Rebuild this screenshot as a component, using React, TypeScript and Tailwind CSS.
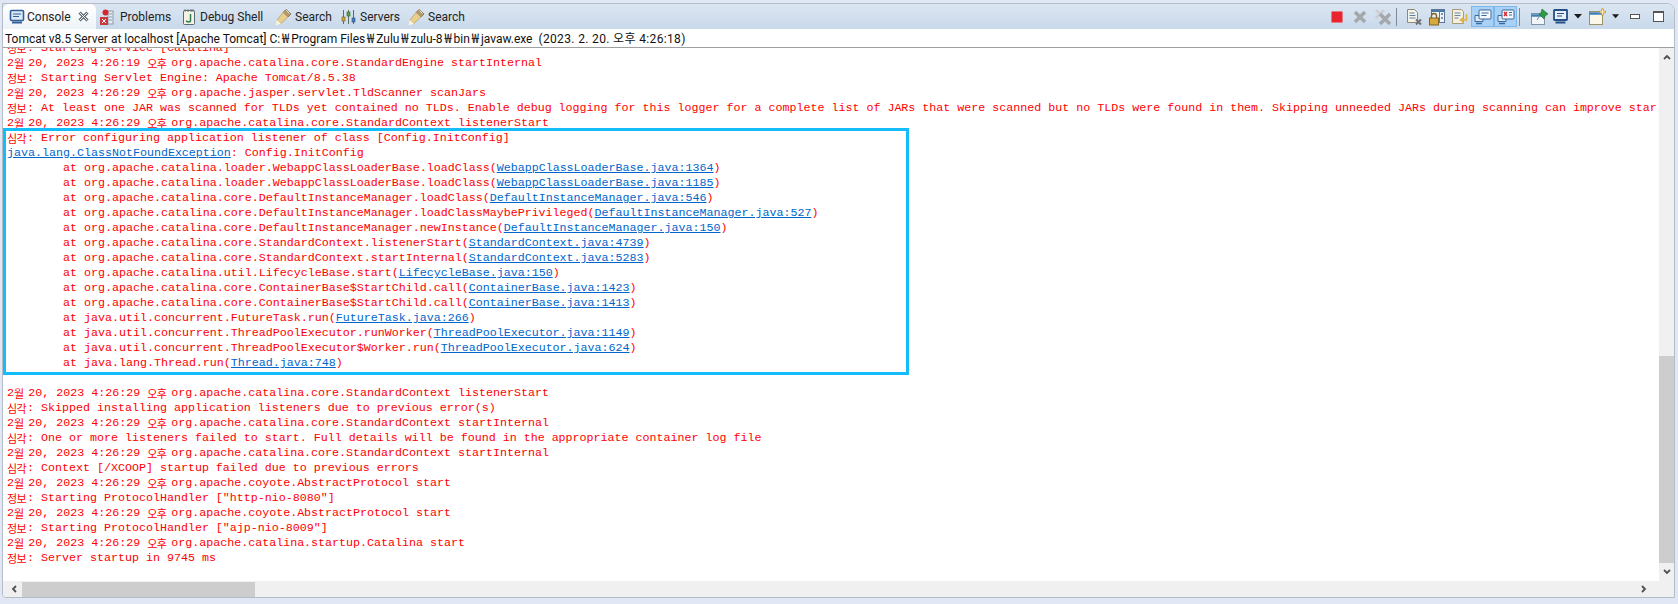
import React from 'react';

const mono = "font-['Liberation_Mono','DejaVu_Sans_Mono',monospace]";

const Ko = ({ w, t }: { w: string; t: string }) => (
  <span className={`inline-block ${w} text-[11px] tracking-[-0.5px] font-['Noto_Sans_CJK_KR',sans-serif] leading-[15px] align-top`}>{t}</span>
);

const Stamp = ({ time, rest }: { time: string; rest: string }) => (
  <div className="h-[15px] whitespace-pre">
    2<Ko w="w-[7.3px]" t="월" /> 20, 2023 {time} <Ko w="w-[17px]" t="오후" /> {rest}
  </div>
);

const Info = ({ text }: { text: string }) => (
  <div className="h-[15px] whitespace-pre">
    <Ko w="w-[20px]" t="정보" />: {text}
  </div>
);

const Severe = ({ text }: { text: string }) => (
  <div className="h-[15px] whitespace-pre">
    <Ko w="w-[20px]" t="심각" />: {text}
  </div>
);

const FileLink = ({ children }: { children: React.ReactNode }) => (
  <span className="text-[#0066cc] underline">{children}</span>
);

const Won = () => (
  <span className="inline-block w-[11px] text-center font-['Noto_Sans_CJK_KR',sans-serif] text-[13px] leading-none">₩</span>
);

const stack = [
  ['org.apache.catalina.loader.WebappClassLoaderBase.loadClass', 'WebappClassLoaderBase.java:1364'],
  ['org.apache.catalina.loader.WebappClassLoaderBase.loadClass', 'WebappClassLoaderBase.java:1185'],
  ['org.apache.catalina.core.DefaultInstanceManager.loadClass', 'DefaultInstanceManager.java:546'],
  ['org.apache.catalina.core.DefaultInstanceManager.loadClassMaybePrivileged', 'DefaultInstanceManager.java:527'],
  ['org.apache.catalina.core.DefaultInstanceManager.newInstance', 'DefaultInstanceManager.java:150'],
  ['org.apache.catalina.core.StandardContext.listenerStart', 'StandardContext.java:4739'],
  ['org.apache.catalina.core.StandardContext.startInternal', 'StandardContext.java:5283'],
  ['org.apache.catalina.util.LifecycleBase.start', 'LifecycleBase.java:150'],
  ['org.apache.catalina.core.ContainerBase$StartChild.call', 'ContainerBase.java:1423'],
  ['org.apache.catalina.core.ContainerBase$StartChild.call', 'ContainerBase.java:1413'],
  ['java.util.concurrent.FutureTask.run', 'FutureTask.java:266'],
  ['java.util.concurrent.ThreadPoolExecutor.runWorker', 'ThreadPoolExecutor.java:1149'],
  ['java.util.concurrent.ThreadPoolExecutor$Worker.run', 'ThreadPoolExecutor.java:624'],
  ['java.lang.Thread.run', 'Thread.java:748'],
];

// tab icons
const ConsoleIcon = () => (
  <svg width="16" height="16" viewBox="0 0 16 16">
    <rect x="1.5" y="1.5" width="13" height="10" rx="1" fill="#dfe9f5" stroke="#2f5f96" strokeWidth="1.6" />
    <path d="M4 5h8M4 7.5h6" stroke="#2f5f96" strokeWidth="1" />
    <path d="M3 13.5h10" stroke="#2f5f96" strokeWidth="2" />
  </svg>
);
const CloseIcon = () => (
  <svg width="11" height="11" viewBox="0 0 11 11">
    <path d="M1.5 1.5l8 8M9.5 1.5l-8 8" stroke="#5a6670" strokeWidth="3" />
    <path d="M1.5 1.5l8 8M9.5 1.5l-8 8" stroke="#f4f6f8" strokeWidth="1" />
  </svg>
);
const ProblemsIcon = () => (
  <svg width="16" height="18" viewBox="0 0 16 18">
    <rect x="9" y="3" width="5" height="13" fill="#e4ebf2" stroke="#8d9aa8" />
    <path d="M10 6h3M10 9h3M10 12h3" stroke="#8d9aa8" />
    <circle cx="6.5" cy="4.5" r="3" fill="#d8262c" />
    <rect x="1" y="9" width="8" height="8" fill="#c93a3e" />
    <path d="M3 11l4 4M7 11l-4 4" stroke="#fff" strokeWidth="1" />
  </svg>
);
const DebugIcon = () => (
  <svg width="14" height="18" viewBox="0 0 14 18">
    <rect x="1.5" y="2.5" width="11" height="14" rx="1" fill="#f6f3e4" stroke="#5f6b72" />
    <path d="M3 1v3M6 1v3M9 1v3M11 1v3" stroke="#6d7880" />
    <path d="M8.5 6v6.5q0 1.5-2 1.5t-2-1.5" fill="none" stroke="#2e7d4f" strokeWidth="1.5" />
  </svg>
);
const SearchIcon = () => (
  <svg width="19" height="18" viewBox="0 0 19 18">
    <path d="M12 1.5l5 4.5-3 3-5-4.5z" fill="#b39a6a" stroke="#8a7a5a" />
    <path d="M9 4.5l5 4.5-7 6.5L3 12z" fill="#e9cf8e" stroke="#b89b5c" strokeWidth="0.7" />
    <path d="M3 12l4 3.5-5.5 2z" fill="#fbf3d2" />
    <path d="M12.5 2.5l3 3" stroke="#e8e4d8" />
  </svg>
);
const ServersIcon = () => (
  <svg width="15" height="16" viewBox="0 0 15 16">
    <path d="M2.5 1v14M7.5 1v14M12.5 1v14" stroke="#5f6b5f" />
    <rect x="1" y="8" width="3" height="4" fill="#d6a93a" stroke="#6b5a20" strokeWidth="0.6" />
    <rect x="6" y="3" width="3" height="4" fill="#5aa24a" stroke="#2f6a2a" strokeWidth="0.6" />
    <rect x="11" y="9" width="3" height="4" fill="#4a7fc0" stroke="#2a4f80" strokeWidth="0.6" />
  </svg>
);

// toolbar icons
const StopIcon = () => (
  <svg width="16" height="16" viewBox="0 0 16 16">
    <rect x="2.5" y="2.5" width="11" height="11" rx="1" fill="#e8252f" stroke="#e57a80" />
  </svg>
);
const GrayX = () => (
  <svg width="16" height="16" viewBox="0 0 16 16">
    <path d="M3 3l10 10M13 3L3 13" stroke="#a4a8ac" strokeWidth="3.6" />
  </svg>
);
const GrayXX = () => (
  <svg width="18" height="18" viewBox="0 0 18 18">
    <path d="M2 2l8 8M10 2l-8 8" stroke="#ccd0d4" strokeWidth="3" />
    <path d="M6 6l10 10M16 6L6 16" stroke="#a4a8ac" strokeWidth="3.4" />
  </svg>
);
const DocX = () => (
  <svg width="18" height="18" viewBox="0 0 18 18">
    <path d="M2.5 1.5h7l3 3v10h-10z" fill="#f3f3ea" stroke="#8d8a70" />
    <path d="M4.5 5h5M4.5 7.5h6M4.5 10h6" stroke="#5a7fa8" />
    <path d="M11 11.5l5 5M16 11.5l-5 5" stroke="#6e7276" strokeWidth="2" />
  </svg>
);
const LockIcon = () => (
  <svg width="18" height="18" viewBox="0 0 18 18">
    <rect x="3.5" y="1.5" width="13" height="13" fill="#eef3f8" stroke="#5f7590" />
    <path d="M3.5 3h13" stroke="#4a78a8" strokeWidth="2" />
    <path d="M11.5 2v12" stroke="#5f7590" />
    <path d="M13 6h2M13 10h2" stroke="#4a78a8" strokeWidth="1.5" />
    <path d="M3.5 10V8a2.5 2.5 0 015 0v2" fill="none" stroke="#7c6428" strokeWidth="1.4" />
    <rect x="1.5" y="10" width="9" height="7" fill="#d9a93e" stroke="#7c6428" />
  </svg>
);
const DocArrow = () => (
  <svg width="18" height="18" viewBox="0 0 18 18">
    <path d="M1.5 1.5h9l2 2v12h-11z" fill="#f4f0df" stroke="#a89c78" />
    <path d="M3.5 5h6M3.5 7.5h6M3.5 10h4" stroke="#6a88a8" />
    <path d="M15.5 6v6h-5M12.5 9.5l-3 2.5 3 2.5" fill="none" stroke="#e2b24a" strokeWidth="1.6" />
  </svg>
);
const Monitors = ({ red }: { red?: boolean }) => (
  <svg width="18" height="18" viewBox="0 0 18 18">
    <path d="M1 7.5h8v6H1z" fill="#dce8f4" stroke="#3b6a9c" />
    <path d="M2 15.5h6" stroke="#3b6a9c" strokeWidth="1.5" />
    <rect x="5" y="2" width="12" height="9" rx="1" fill="#f4f8fc" stroke="#3b6a9c" />
    {red ? (
      <>
        <path d="M7 4l3 4M10 4L7 8" stroke="#d9262c" strokeWidth="1.4" />
        <path d="M12 4.5h3M12 7h3" stroke="#3b6a9c" />
      </>
    ) : (
      <path d="M7.5 5h7M7.5 7.5h5" stroke="#3b6a9c" />
    )}
  </svg>
);
const PinIcon = () => (
  <svg width="20" height="18" viewBox="0 0 20 18">
    <rect x="1.5" y="5.5" width="13" height="11" fill="#f2f6fa" stroke="#7d94ab" />
    <path d="M1.5 7.5h13" stroke="#3f7fb8" strokeWidth="2.4" />
    <path d="M12 1l6 5-3 2-1 3-5-5 2-1z" fill="#2f9a46" stroke="#1e6e30" strokeWidth="0.6" />
    <path d="M9 9l-2 3" stroke="#7d8a80" />
  </svg>
);
const ViewMonitor = () => (
  <svg width="18" height="18" viewBox="0 0 18 18">
    <rect x="2" y="2" width="13" height="10" rx="0.5" fill="#e9f0f8" stroke="#234f86" strokeWidth="1.8" />
    <path d="M5 5.5h7M5 8h5" stroke="#234f86" />
    <path d="M3.5 14.5h10" stroke="#234f86" strokeWidth="2" />
  </svg>
);
const NewConsole = () => (
  <svg width="20" height="18" viewBox="0 0 20 18">
    <rect x="1.5" y="3.5" width="13" height="13" fill="#fbf8ea" stroke="#9c9266" />
    <path d="M1.5 5.5h13" stroke="#3f7fb8" strokeWidth="2.4" />
    <path d="M14.5 0.5v7M11 4h7" stroke="#c99a2e" strokeWidth="2.6" />
    <path d="M14.5 1.5v5M12 4h5" stroke="#fbeeb8" strokeWidth="1.2" />
  </svg>
);
const Caret = () => (
  <svg width="9" height="5" viewBox="0 0 9 5">
    <path d="M0 0h8L4 4.5z" fill="#1c1c1c" />
  </svg>
);

const Tab = ({ icon, label, w, iw }: { icon: React.ReactNode; label: string; w: string; iw: string }) => (
  <div className={`flex items-center shrink-0 ${w}`}>
    <span className={`flex shrink-0 ${iw}`}>{icon}</span>
    <span className="text-[12px] text-[#222]">{label}</span>
  </div>
);

const Tool = ({ children, on, w }: { children: React.ReactNode; on?: boolean; w: string }) => (
  <div className={`${w} h-[21px] flex items-center justify-center ${on ? 'bg-[#a9d1f5] outline outline-1 -outline-offset-1 outline-[#7db8ec]' : ''}`}>
    {children}
  </div>
);

const Chevron = ({ d }: { d: string }) => (
  <svg width="8" height="8" viewBox="0 0 8 8">
    <path d={d} fill="none" stroke="#505050" strokeWidth="1.8" />
  </svg>
);

export default function App() {
  return (
    <div className="h-[604px] w-[1678px] bg-[#e2e7f6] pt-[3px] pl-[2px] pr-[3px] pb-[6px] font-['Roboto','Noto_Sans_CJK_KR',sans-serif] overflow-hidden">
      <div className="h-full flex flex-col border border-[#b4bcc6] rounded-tr-[8px] rounded-bl-[4px] bg-white overflow-hidden">
        {/* Tab bar */}
        <div className="h-[25px] shrink-0 flex items-center justify-between bg-gradient-to-b from-[#dbe6f2] to-[#c9d9ea]">
          <div className="flex items-center h-full">
            <div className="h-full w-[93px] shrink-0 bg-gradient-to-b from-white to-[#eef3f8] rounded-t-[6px] flex items-center pl-[6px] mr-[3px]">
              <Tab icon={<ConsoleIcon />} label="Console" w="w-[69px]" iw="w-[18px]" />
              <span className="flex"><CloseIcon /></span>
            </div>
            <Tab icon={<ProblemsIcon />} label="Problems" w="w-[83px]" iw="w-[21px]" />
            <Tab icon={<DebugIcon />} label="Debug Shell" w="w-[92px]" iw="w-[18px]" />
            <Tab icon={<SearchIcon />} label="Search" w="w-[67px]" iw="w-[21px]" />
            <Tab icon={<ServersIcon />} label="Servers" w="w-[66px]" iw="w-[19px]" />
            <Tab icon={<SearchIcon />} label="Search" w="w-[60px]" iw="w-[21px]" />
          </div>
          <div className="flex items-center pr-[8px]">
            <Tool w="w-[23px]"><StopIcon /></Tool>
            <Tool w="w-[24px]"><GrayX /></Tool>
            <Tool w="w-[22px]"><GrayXX /></Tool>
            <div className="w-px h-[18px] bg-[#7f8a94] ml-[2px] mr-[5px]" />
            <Tool w="w-[23px]"><DocX /></Tool>
            <Tool w="w-[24px]"><LockIcon /></Tool>
            <Tool w="w-[22px]"><DocArrow /></Tool>
            <Tool w="w-[23px]" on><Monitors /></Tool>
            <Tool w="w-[23px]" on><Monitors red /></Tool>
            <div className="w-px h-[18px] bg-[#7f8a94] ml-[2px] mr-[10px]" />
            <Tool w="w-[20px]"><PinIcon /></Tool>
            <Tool w="w-[22px]"><ViewMonitor /></Tool>
            <Tool w="w-[12px]"><Caret /></Tool>
            <Tool w="w-[28px]"><NewConsole /></Tool>
            <Tool w="w-[8px]"><Caret /></Tool>
            <Tool w="w-[30px]"><div className="w-[10px] h-[5px] border border-[#555] bg-white" /></Tool>
            <Tool w="w-[16px]"><div className="w-[11px] h-[11px] border border-[#555] border-t-[2px] bg-white" /></Tool>
          </div>
        </div>

        {/* Process description */}
        <div className="h-[19px] shrink-0 flex items-center pl-[2px] border-b border-[#a0a0a0] text-[12px] text-[#111] leading-none">
          <span className="whitespace-pre">
            Tomcat v8.5 Server at localhost [Apache Tomcat] C:<Won />Program Files<Won />Zulu<Won />zulu-8<Won />bin<Won />javaw.exe  <span className="tracking-[0.35px]">(2023. 2. 20. 오후 4:26:18)</span>
          </span>
        </div>

        {/* Console output */}
        <div className="flex-1 min-h-0 flex">
          <div className={`flex-1 min-w-0 overflow-hidden ${mono} text-[11.667px] leading-[15px] text-[#ff0000] pl-[4px]`}>
            <div className="-mt-[7px]">
              <Info text="Starting service [Catalina]" />
              <Stamp time="4:26:19" rest="org.apache.catalina.core.StandardEngine startInternal" />
              <Info text="Starting Servlet Engine: Apache Tomcat/8.5.38" />
              <Stamp time="4:26:29" rest="org.apache.jasper.servlet.TldScanner scanJars" />
              <Info text="At least one JAR was scanned for TLDs yet contained no TLDs. Enable debug logging for this logger for a complete list of JARs that were scanned but no TLDs were found in them. Skipping unneeded JARs during scanning can improve star" />
              <Stamp time="4:26:29" rest="org.apache.catalina.core.StandardContext listenerStart" />
              <div className="relative">
                <div className="absolute -left-[4px] -top-[3px] w-[906px] h-[247px] border-[3px] border-[#14bcfa]" />
                <Severe text="Error configuring application listener of class [Config.InitConfig]" />
                <div className="h-[15px] whitespace-pre">
                  <FileLink>java.lang.ClassNotFoundException</FileLink>: Config.InitConfig
                </div>
                {stack.map(([call, file], i) => (
                  <div key={i} className="h-[15px] whitespace-pre">
                    {'        at '}{call}(<FileLink>{file}</FileLink>)
                  </div>
                ))}
              </div>
              <div className="h-[15px]" />
              <Stamp time="4:26:29" rest="org.apache.catalina.core.StandardContext listenerStart" />
              <Severe text="Skipped installing application listeners due to previous error(s)" />
              <Stamp time="4:26:29" rest="org.apache.catalina.core.StandardContext startInternal" />
              <Severe text="One or more listeners failed to start. Full details will be found in the appropriate container log file" />
              <Stamp time="4:26:29" rest="org.apache.catalina.core.StandardContext startInternal" />
              <Severe text="Context [/XCOOP] startup failed due to previous errors" />
              <Stamp time="4:26:29" rest="org.apache.coyote.AbstractProtocol start" />
              <Info text={'Starting ProtocolHandler ["http-nio-8080"]'} />
              <Stamp time="4:26:29" rest="org.apache.coyote.AbstractProtocol start" />
              <Info text={'Starting ProtocolHandler ["ajp-nio-8009"]'} />
              <Stamp time="4:26:29" rest="org.apache.catalina.startup.Catalina start" />
              <Info text="Server startup in 9745 ms" />
            </div>
          </div>

          {/* Vertical scrollbar */}
          <div className="w-[15px] shrink-0 bg-[#f0f0f0] flex flex-col">
            <div className="h-[17px] flex items-center justify-center"><Chevron d="M1 6l3-3 3 3" /></div>
            <div className="h-[291px]" />
            <div className="h-[207px] bg-[#cdcdcd]" />
            <div className="flex-1 flex items-center justify-center"><Chevron d="M1 2l3 3 3-3" /></div>
          </div>
        </div>

        {/* Horizontal scrollbar */}
        <div className="h-[16px] shrink-0 bg-[#f0f0f0] flex items-center">
          <div className="w-[19px] flex justify-center pl-[3px]"><Chevron d="M6 1L3 4l3 3" /></div>
          <div className="h-[15px] w-[233px] bg-[#cdcdcd]" />
          <div className="flex-1" />
          <div className="w-[36px] flex justify-start pl-[2px]"><Chevron d="M2 1l3 3-3 3" /></div>
        </div>
      </div>
    </div>
  );
}
